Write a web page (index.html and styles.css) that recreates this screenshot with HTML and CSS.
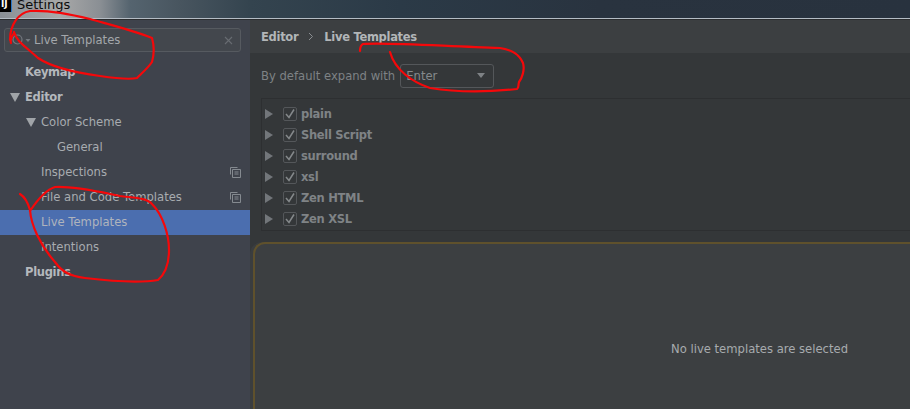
FILE: index.html
```html
<!DOCTYPE html>
<html lang="en">
<head>
<meta charset="utf-8">
<title>Settings</title>
<link rel="stylesheet" href="styles.css">
</head>
<body>
<div class="window">
  <header class="titlebar">
    <span class="app-icon"><span class="app-glyph">IJ</span></span>
    <span class="title">Settings</span>
  </header>
  <div class="content">
    <aside class="sidebar">
      <div class="search">
        <svg class="search-icon" width="20" height="14" viewBox="0 0 20 14"><circle cx="5.5" cy="5.5" r="4.500" fill="none" stroke="#75797f" stroke-width="1.200"/><path d="M9 9L12.500 12.500" stroke="#75797f" stroke-width="1.400"/><path d="M13.500 5h5l-2.500 3z" fill="#75797f"/></svg>
        <span class="search-text">Live Templates</span>
        <svg class="clear-icon" width="9" height="9" viewBox="0 0 9 9"><path d="M1 1l7 7M8 1L1 8" stroke="#686c72" stroke-width="1.100"/></svg>
      </div>
      <nav class="tree">
        <div class="node lvl0 bold">Keymap</div>
        <div class="node lvl0 bold"><span class="tw"></span>Editor</div>
        <div class="node lvl1"><span class="tw"></span>Color Scheme</div>
        <div class="node lvl2">General</div>
        <div class="node lvl1b">Inspections<svg class="copy" width="11" height="11" viewBox="0 0 11 11"><path d="M.5 7.500V.5h7M2.500 10.500V2.500h8v8h-8z M4.500 5h4M4.500 7h4" fill="none" stroke="#858a90"/></svg></div>
        <div class="node lvl1b">File and Code Templates<svg class="copy" width="11" height="11" viewBox="0 0 11 11"><path d="M.5 7.500V.5h7M2.500 10.500V2.500h8v8h-8z M4.500 5h4M4.500 7h4" fill="none" stroke="#858a90"/></svg></div>
        <div class="node lvl1b selected">Live Templates</div>
        <div class="node lvl1b">Intentions</div>
        <div class="node lvl0 bold">Plugins</div>
      </nav>
    </aside>
    <main class="main">
      <div class="crumbs"><span>Editor</span><svg class="sep" width="6" height="9" viewBox="0 0 6 9"><path d="M1 1l3.500 3.500L1 8" fill="none" stroke="#8a8e91"/></svg><span>Live Templates</span></div>
      <div class="expand">
        <span class="expand-label">By default expand with</span>
        <div class="select"><span>Enter</span><span class="caret"></span></div>
      </div>
      <div class="list">
        <div class="row"><span class="arrow"></span><span class="check"><svg width="14" height="14" viewBox="0 0 14 14"><path d="M3 7l3 3.500 5-8" fill="none" stroke="#85898b" stroke-width="1.500"/></svg></span>plain</div>
        <div class="row"><span class="arrow"></span><span class="check"><svg width="14" height="14" viewBox="0 0 14 14"><path d="M3 7l3 3.500 5-8" fill="none" stroke="#85898b" stroke-width="1.500"/></svg></span>Shell Script</div>
        <div class="row"><span class="arrow"></span><span class="check"><svg width="14" height="14" viewBox="0 0 14 14"><path d="M3 7l3 3.500 5-8" fill="none" stroke="#85898b" stroke-width="1.500"/></svg></span>surround</div>
        <div class="row"><span class="arrow"></span><span class="check"><svg width="14" height="14" viewBox="0 0 14 14"><path d="M3 7l3 3.500 5-8" fill="none" stroke="#85898b" stroke-width="1.500"/></svg></span>xsl</div>
        <div class="row"><span class="arrow"></span><span class="check"><svg width="14" height="14" viewBox="0 0 14 14"><path d="M3 7l3 3.500 5-8" fill="none" stroke="#85898b" stroke-width="1.500"/></svg></span>Zen HTML</div>
        <div class="row"><span class="arrow"></span><span class="check"><svg width="14" height="14" viewBox="0 0 14 14"><path d="M3 7l3 3.500 5-8" fill="none" stroke="#85898b" stroke-width="1.500"/></svg></span>Zen XSL</div>
      </div>
      <div class="detail"><span class="empty">No live templates are selected</span></div>
    </main>
  </div>
  <svg class="scribble" width="910" height="409" viewBox="0 0 910 409">
    <path d="M14 33C11 38 10 41 11 43M14 32C17 42 25 46 38 58C50 66 70 72 100 76C120 79 133 79 137 78C142 73 148 68 152 62C154 55 154 45 152 38C135 31 115 26 90 19C70 14 45 10 30 11C18 13 10 25 10 40"/>
    <path d="M20 194C25 197 28 203 30 210C31 225 40 245 55 262C62 272 70 276 85 278C110 281 140 283 158 280C165 274 169 265 169 250C169 235 163 215 152 204C147 198 135 198 120 196C100 192 75 186 55 187C45 190 36 202 30 211"/>
    <path d="M360 51C360 47 361 45 363 44C385 42 440 46 500 48C512 50 519 54 523 63C525 70 522 78 519 82C518 86 519 88 517 89C490 92 460 93 430 88C412 82 395 70 390 52"/>
  </svg>
</div>
</body>
</html>
```

FILE: styles.css
```css
html, body {
  margin: 0;
  padding: 0;
  background: #3c3f41;
}

.window {
  position: relative;
  width: 910px;
  height: 409px;
  overflow: hidden;
  display: flex;
  flex-direction: column;
  font-family: "DejaVu Sans", sans-serif;
  font-size: 11.6px;
}

.titlebar {
  flex: none;
  height: 18px;
  display: flex;
  align-items: flex-start;
  background: linear-gradient(90deg, #8a9096 0, #a8a8a8 60px, #8a8f94 100px, #55646f 130px, #48555f 180px, #34444f 250px, #2b3a47 400px, #29333f 600px, #28323e 910px);
  border-bottom: 1px solid #b4bcc4;
  box-shadow: 0 1px 0 #2b2d2f;
}

.app-icon {
  width: 11px;
  height: 12px;
  background: #000;
  border-right: 1px solid #2a76c6;
  color: #fff;
  overflow: hidden;
}

.app-glyph {
  display: block;
  font-size: 9px;
  font-weight: bold;
  line-height: 8px;
  margin-left: 1px;
}

.title {
  margin-left: 5px;
  margin-top: -4px;
  color: #0c0c0c;
  font-size: 13px;
  line-height: 17px;
}

.content {
  flex: 1;
  display: flex;
  min-height: 0;
  margin-top: 1px;
}

.sidebar {
  flex: none;
  width: 250px;
  background: #3f434c;
  padding-top: 8px;
  box-sizing: border-box;
}

.search {
  margin-left: 4px;
  width: 237px;
  height: 24px;
  box-sizing: border-box;
  border: 1px solid #565a60;
  border-radius: 3px;
  display: flex;
  align-items: center;
  background: #43474d;
}

.search-icon {
  flex: none;
  margin-left: 7px;
  margin-top: 2px;
}

.search-text {
  margin-left: 2px;
  color: #a3a7ab;
  flex: 1;
}

.clear-icon {
  flex: none;
  margin-right: 7px;
}

.tree {
  margin-top: 8px;
}

.node {
  position: relative;
  height: 25px;
  line-height: 25px;
  color: #a8acb0;
  white-space: nowrap;
}

.bold {
  font-weight: bold;
  font-size: 11.5px;
  letter-spacing: -0.3px;
  color: #b4b8bc;
}

.lvl0 {
  padding-left: 25px;
}

.lvl1, .lvl1b {
  padding-left: 41px;
}

.lvl2 {
  padding-left: 57px;
}

.tw {
  position: absolute;
  top: 8px;
  width: 0;
  height: 0;
  border-left: 5px solid transparent;
  border-right: 5px solid transparent;
  border-top: 9px solid #a0a4a8;
}

.lvl0 .tw {
  left: 10px;
}

.lvl1 .tw {
  left: 26px;
}

.selected {
  background: #4b6eaf;
  color: #afb4bd;
}

.copy {
  position: absolute;
  right: 9px;
  top: 7px;
}

.main {
  flex: 1;
  min-width: 0;
  display: flex;
  flex-direction: column;
  background: #343739;
}

.crumbs {
  flex: none;
  height: 33px;
  padding-left: 11px;
  display: flex;
  align-items: center;
  gap: 10px;
  font-weight: bold;
  font-size: 11.5px;
  letter-spacing: -0.3px;
  color: #b2b6b8;
  background: #3c3f41;
}

.sep {
  flex: none;
}

.expand {
  flex: none;
  height: 45px;
  padding-left: 11px;
  display: flex;
  align-items: center;
  gap: 5px;
  color: #7e8285;
}

.select {
  width: 94px;
  height: 24px;
  box-sizing: border-box;
  border: 1px solid #54575a;
  border-radius: 3px;
  display: flex;
  align-items: center;
  justify-content: space-between;
  padding: 0 8px 0 5px;
  color: #85898c;
}

.caret {
  width: 0;
  height: 0;
  border-left: 4px solid transparent;
  border-right: 4px solid transparent;
  border-top: 5px solid #7e8285;
}

.list {
  flex: none;
  margin-left: 11px;
  height: 133px;
  box-sizing: border-box;
  border-top: 1px solid #2d2f31;
  border-left: 1px solid #2d2f31;
  border-bottom: 1px solid #2d2f31;
  padding-top: 4px;
}

.row {
  height: 21px;
  display: flex;
  align-items: center;
  font-weight: bold;
  font-size: 11.5px;
  letter-spacing: -0.3px;
  color: #7f8386;
}

.arrow {
  flex: none;
  margin-left: 3px;
  width: 0;
  height: 0;
  border-top: 5px solid transparent;
  border-bottom: 5px solid transparent;
  border-left: 8px solid #72767a;
}

.check {
  flex: none;
  margin-left: 10px;
  margin-right: 4px;
  width: 14px;
  height: 14px;
  box-sizing: border-box;
  border: 1px solid #54575a;
  border-radius: 2px;
  display: flex;
  align-items: center;
  justify-content: center;
}

.check svg {
  flex: none;
}

.detail {
  flex: 1;
  margin-top: 11px;
  margin-left: 3px;
  border-top: 2px solid #5f512c;
  border-left: 2px solid #5f512c;
  border-top-left-radius: 12px;
  background: #3c3f41;
  display: flex;
  align-items: center;
  box-shadow: -3px 0 0 #3a3d3f;
  padding-left: 416px;
  padding-top: 45px;
  box-sizing: border-box;
}

.empty {
  color: #a7abae;
  white-space: nowrap;
}

.scribble {
  position: absolute;
  left: 0;
  top: 0;
  pointer-events: none;
}

.scribble path {
  fill: none;
  stroke: #f5080a;
  stroke-width: 2.2;
  stroke-linecap: round;
  stroke-linejoin: round;
}
```
